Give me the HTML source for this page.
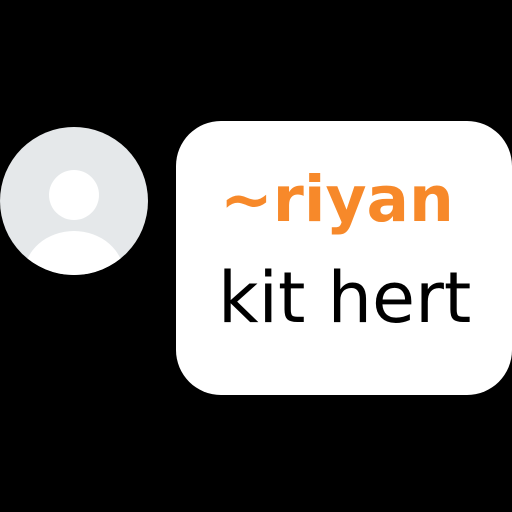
<!DOCTYPE html>
<html><head><style>
html,body{margin:0;padding:0;background:#000;width:512px;height:512px;overflow:hidden}
.t{position:absolute;font-family:"DejaVu Sans",sans-serif;white-space:nowrap;line-height:1}
</style></head><body>
<svg width="512" height="512" style="position:absolute;left:0;top:0">
<defs><clipPath id="c"><circle cx="74" cy="201" r="74"/></clipPath></defs>
<circle cx="74" cy="201" r="74" fill="#e5e8ea"/>
<g clip-path="url(#c)" fill="#fff">
<circle cx="74" cy="195" r="25"/>
<ellipse cx="74" cy="275" rx="50" ry="44"/>
</g>
<rect x="176" y="121" width="336" height="274" rx="45" fill="#fff"/>
</svg>
<div class="t" style="left:220px;top:168px;font-size:63px;font-weight:bold;color:#f7892a">~riyan</div>
<div class="t" style="left:218px;top:263px;font-size:70px;color:#000">kit hert</div>
</body></html>
